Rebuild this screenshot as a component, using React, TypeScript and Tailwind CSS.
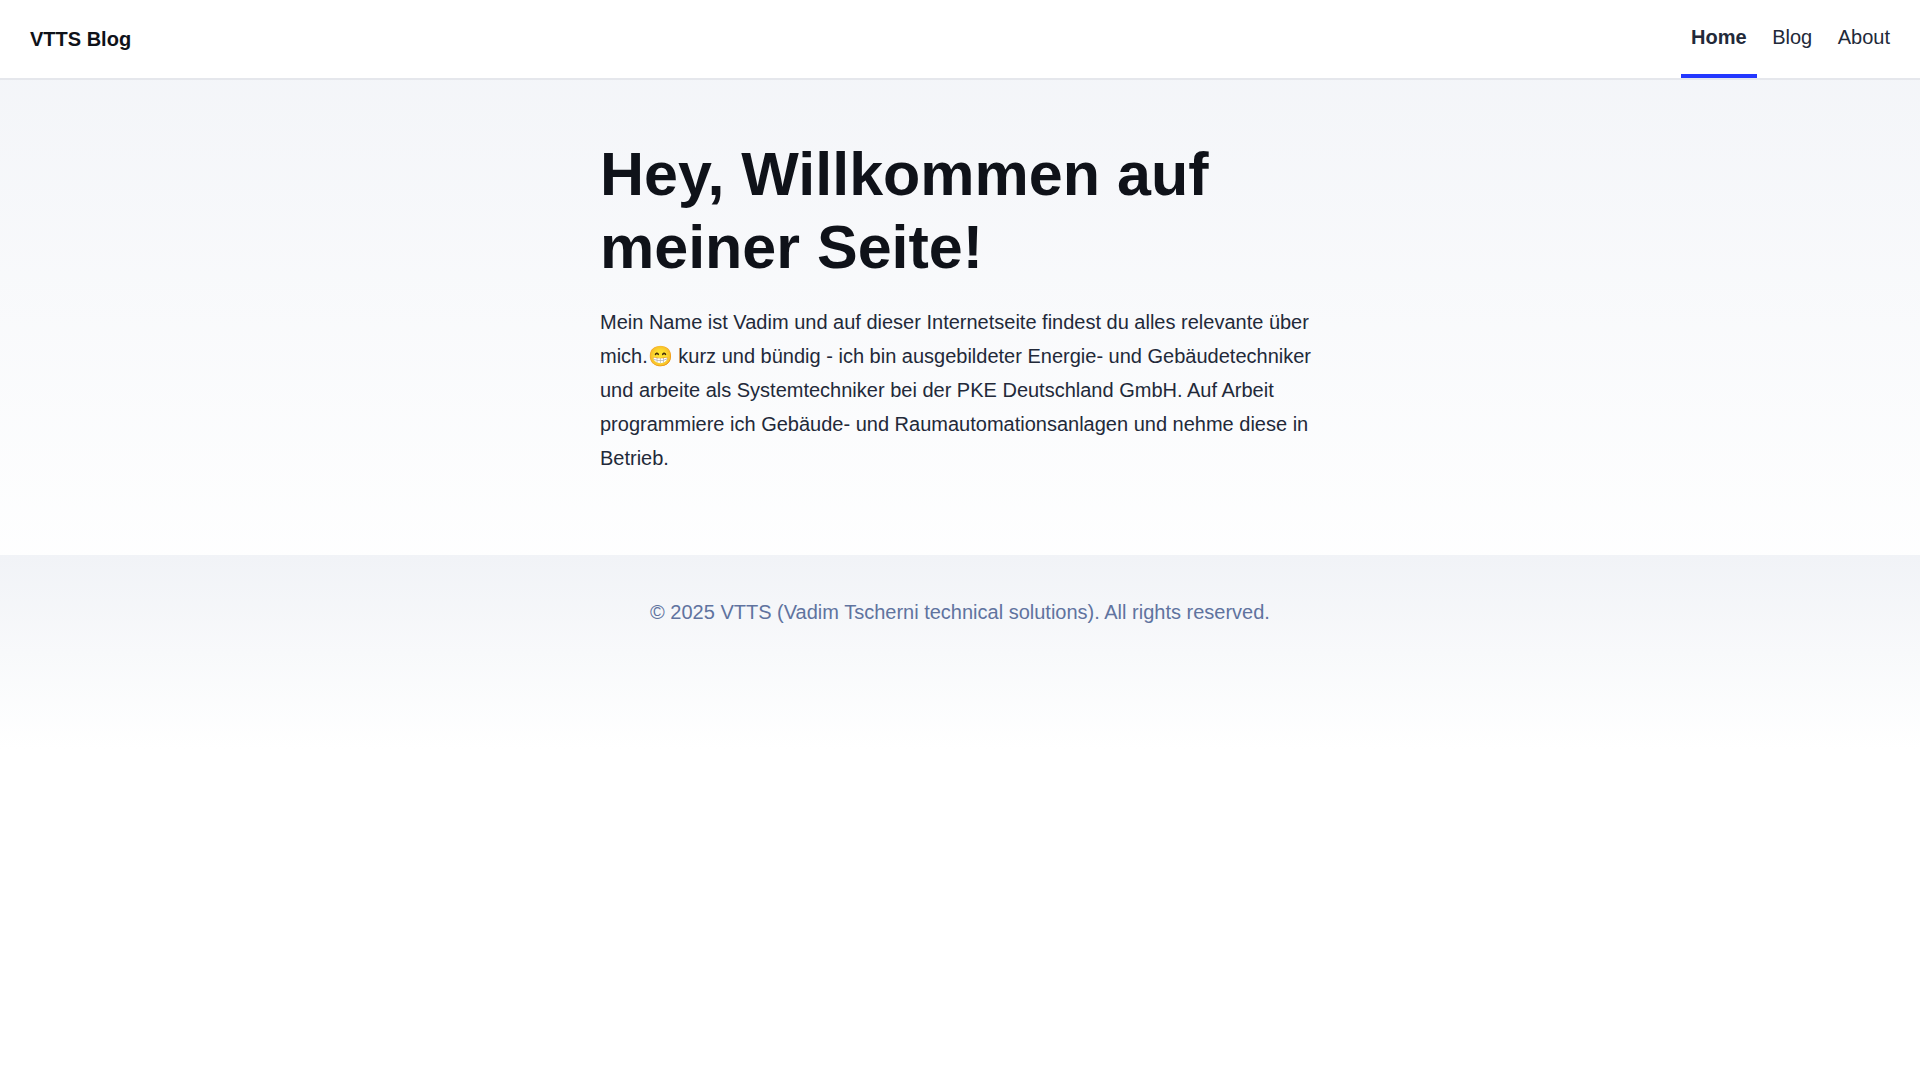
import { clsx } from 'clsx';
import { Fragment } from 'react';

interface NavItem {
  label: string;
  href: string;
}

const navItems: NavItem[] = [
  { label: 'Home', href: '/' },
  { label: 'Blog', href: '/blog' },
  { label: 'About', href: '/about' },
];

function Header({ current }: { current: string }) {
  return (
    <header className="bg-white px-[30px] shadow-[0_2px_0_#e5e7ec]">
      <nav className="flex items-center justify-between">
        <h2 className="text-xl leading-6 font-bold text-[#0f1219]">
          <a href="/">VTTS Blog</a>
        </h2>
        <div className="-mr-[10px]">
          {navItems.map((item) => (
            <Fragment key={item.href}>
              <a
                href={item.href}
                className={clsx(
                  'inline-block border-b-4 px-[10px] py-5',
                  item.href === current
                    ? 'border-[#2337ff] font-bold'
                    : 'border-transparent'
                )}
              >
                {item.label}
              </a>{' '}
            </Fragment>
          ))}
        </div>
      </nav>
    </header>
  );
}

function Footer() {
  return (
    <footer className="bg-linear-to-b from-[#f1f3f7] to-white px-5 pt-10 pb-[120px] text-center text-[#60739f]">
      © 2025 VTTS (Vadim Tscherni technical solutions). All rights reserved.
    </footer>
  );
}

export default function App() {
  return (
    <div className="min-h-screen bg-white bg-linear-to-b from-[#f2f4f8] to-white bg-[length:100%_600px] bg-no-repeat font-['Liberation_Sans',Arial,sans-serif] text-xl leading-[34px] text-[#222939]">
      <Header current="/" />
      <main className="mx-auto w-full max-w-[760px] px-5 py-[60px]">
        <h1 className="mb-[21px] text-[61px] leading-[73px] font-bold text-[#0f1219]">
          Hey, Willkommen auf meiner Seite!
        </h1>
        <p className="mb-5">
          Mein Name ist Vadim und auf dieser Internetseite findest du alles
          relevante über mich.😁 kurz und bündig - ich bin ausgebildeter
          Energie- und Gebäudetechniker und arbeite als Systemtechniker bei der
          PKE Deutschland GmbH. Auf Arbeit programmiere ich Gebäude- und
          Raumautomationsanlagen und nehme diese in Betrieb.
        </p>
      </main>
      <Footer />
    </div>
  );
}
